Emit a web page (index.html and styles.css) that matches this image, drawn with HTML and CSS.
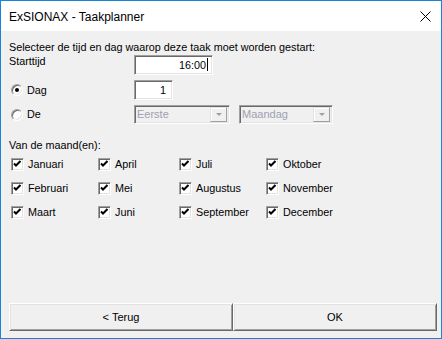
FILE: index.html
```html
<!DOCTYPE html>
<html lang="nl">
<head>
    <meta charset="UTF-8">
    <meta name="viewport" content="width=device-width, initial-scale=1.0">
    <title>ExSIONAX - Taakplanner</title>
    <link rel="stylesheet" href="styles.css">
</head>
<body>
    <div class="window">
        <div class="titlebar">
            <span class="title">ExSIONAX - Taakplanner</span>
            <svg class="close" width="11" height="11" viewBox="0 0 11 11">
                <path d="M0.5 0.5 L10.5 10.5 M10.5 0.5 L0.5 10.5" stroke="#000" stroke-width="1" fill="none"/>
            </svg>
        </div>
        <div class="content">
            <div class="intro">Selecteer de tijd en dag waarop deze taak moet worden gestart:</div>

            <div class="row row-time">
                <div class="label">Starttijd</div>
                <div class="field field-time">16:00<span class="caret"></span></div>
            </div>

            <div class="row row-day">
                <div class="label option"><span class="radio checked"></span>Dag</div>
                <div class="field field-day">1</div>
            </div>

            <div class="row row-the">
                <div class="label option"><span class="radio"></span>De</div>
                <div class="combo combo-first">
                    <span class="combo-text">Eerste</span>
                    <span class="combo-btn"></span>
                </div>
                <div class="combo combo-day">
                    <span class="combo-text">Maandag</span>
                    <span class="combo-btn"></span>
                </div>
            </div>

            <div class="heading">Van de maand(en):</div>

            <div class="months">
                <div class="month"><span class="check"></span>Januari</div>
                <div class="month"><span class="check"></span>April</div>
                <div class="month"><span class="check"></span>Juli</div>
                <div class="month"><span class="check"></span>Oktober</div>
                <div class="month"><span class="check"></span>Februari</div>
                <div class="month"><span class="check"></span>Mei</div>
                <div class="month"><span class="check"></span>Augustus</div>
                <div class="month"><span class="check"></span>November</div>
                <div class="month"><span class="check"></span>Maart</div>
                <div class="month"><span class="check"></span>Juni</div>
                <div class="month"><span class="check"></span>September</div>
                <div class="month"><span class="check"></span>December</div>
            </div>

            <div class="buttons">
                <button class="btn btn-back">&lt; Terug</button>
                <button class="btn btn-ok">OK</button>
            </div>
        </div>
    </div>
</body>
</html>
```

FILE: styles.css
```css
* {
    box-sizing: border-box;
}
body {
    margin: 0;
    font-family: "Liberation Sans", Arial, sans-serif;
    font-size: 10.8px;
    color: #000;
}
.window {
    width: 442px;
    height: 339px;
    border: 1px solid #1883d7;
    background: #f0f0f0;
    display: flex;
    flex-direction: column;
}
.titlebar {
    height: 30px;
    background: #fff;
    display: flex;
    align-items: center;
    justify-content: space-between;
    padding: 0 10px 0 8px;
}
.title {
    font-size: 12px;
    margin-top: 1px;
}
.close {
    display: block;
}
.content {
    flex: 1;
    display: flex;
    flex-direction: column;
    padding: 10px 3px 7px 8px;
}
.intro {
    line-height: 13px;
}
.row {
    display: flex;
    align-items: center;
}
.row-time {
    align-items: flex-start;
    margin-top: 1px;
}
.row-day,
.row-the {
    margin-top: 5px;
}
.label {
    width: 125px;
    line-height: 13px;
}
.option {
    display: flex;
    align-items: center;
    padding-left: 2px;
}
.field {
    height: 20px;
    background: #fff;
    border: 1px solid;
    border-color: #a0a0a0 #fff #fff #a0a0a0;
    box-shadow: inset 1px 1px 0 #696969, inset -1px -1px 0 #e3e3e3;
    text-align: right;
    line-height: 18px;
    padding-right: 4px;
}
.field-time {
    width: 79px;
}
.field-day {
    width: 39px;
    padding-right: 6px;
}
.caret {
    display: inline-block;
    width: 1px;
    height: 13px;
    background: #000;
    vertical-align: -2px;
    margin-left: 1px;
}
.radio {
    width: 12px;
    height: 12px;
    border-radius: 50%;
    border: 1px solid;
    border-color: #a0a0a0 #fff #fff #a0a0a0;
    box-shadow: inset 1px 1px 0 #696969, inset -1px -1px 0 #e3e3e3;
    background: #fff;
    margin-right: 4px;
    display: flex;
    align-items: center;
    justify-content: center;
}
.radio.checked::after {
    content: "";
    width: 4px;
    height: 4px;
    border-radius: 50%;
    background: #000;
}
.combo {
    height: 19px;
    border: 1px solid;
    border-color: #a0a0a0 #fff #fff #a0a0a0;
    box-shadow: inset 1px 1px 0 #696969, inset -1px -1px 0 #e3e3e3;
    display: flex;
    align-items: center;
    justify-content: space-between;
    padding: 2px;
    color: #a0a0b0;
    line-height: 15px;
    font-size: 11px;
}
.combo-first {
    width: 96px;
}
.combo-day {
    width: 94px;
    margin-left: 9px;
}
.combo-btn {
    width: 17px;
    height: 15px;
    border: 1px solid;
    border-color: #e3e3e3 #a0a0a0 #a0a0a0 #e3e3e3;
    box-shadow: inset 1px 1px 0 #fff;
    display: flex;
    align-items: center;
    justify-content: center;
}
.combo-btn::after {
    content: "";
    border-left: 3px solid transparent;
    border-right: 3px solid transparent;
    border-top: 3px solid #a0a0a0;
}
.heading {
    margin-top: 15px;
    line-height: 13px;
}
.months {
    display: grid;
    grid-template-columns: 87px 81px 87px auto;
    grid-auto-rows: 24px;
    padding-left: 2px;
}
.month {
    display: flex;
    align-items: center;
}
.check {
    width: 13px;
    height: 13px;
    border: 1px solid;
    border-color: #a0a0a0 #fff #fff #a0a0a0;
    box-shadow: inset 1px 1px 0 #696969, inset -1px -1px 0 #e3e3e3;
    background: #fff url("data:image/svg+xml,%3Csvg xmlns='http://www.w3.org/2000/svg' width='13' height='13'%3E%3Cpath d='M3 5.5 L5 7.5 L9.5 3' stroke='%23000' stroke-width='2' fill='none'/%3E%3C/svg%3E") no-repeat -1px -1px;
    margin-right: 4px;
}
.buttons {
    margin-top: auto;
    display: flex;
}
.btn {
    height: 28px;
    font-family: inherit;
    font-size: 11px;
    color: #000;
    background: #f0f0f0;
    border: 1px solid;
    border-color: #fff #696969 #696969 #fff;
    box-shadow: inset 1px 1px 0 #e3e3e3, inset -1px -1px 0 #a0a0a0;
    padding: 0;
}
.btn-back {
    width: 224px;
}
.btn-ok {
    width: 204px;
}
```
